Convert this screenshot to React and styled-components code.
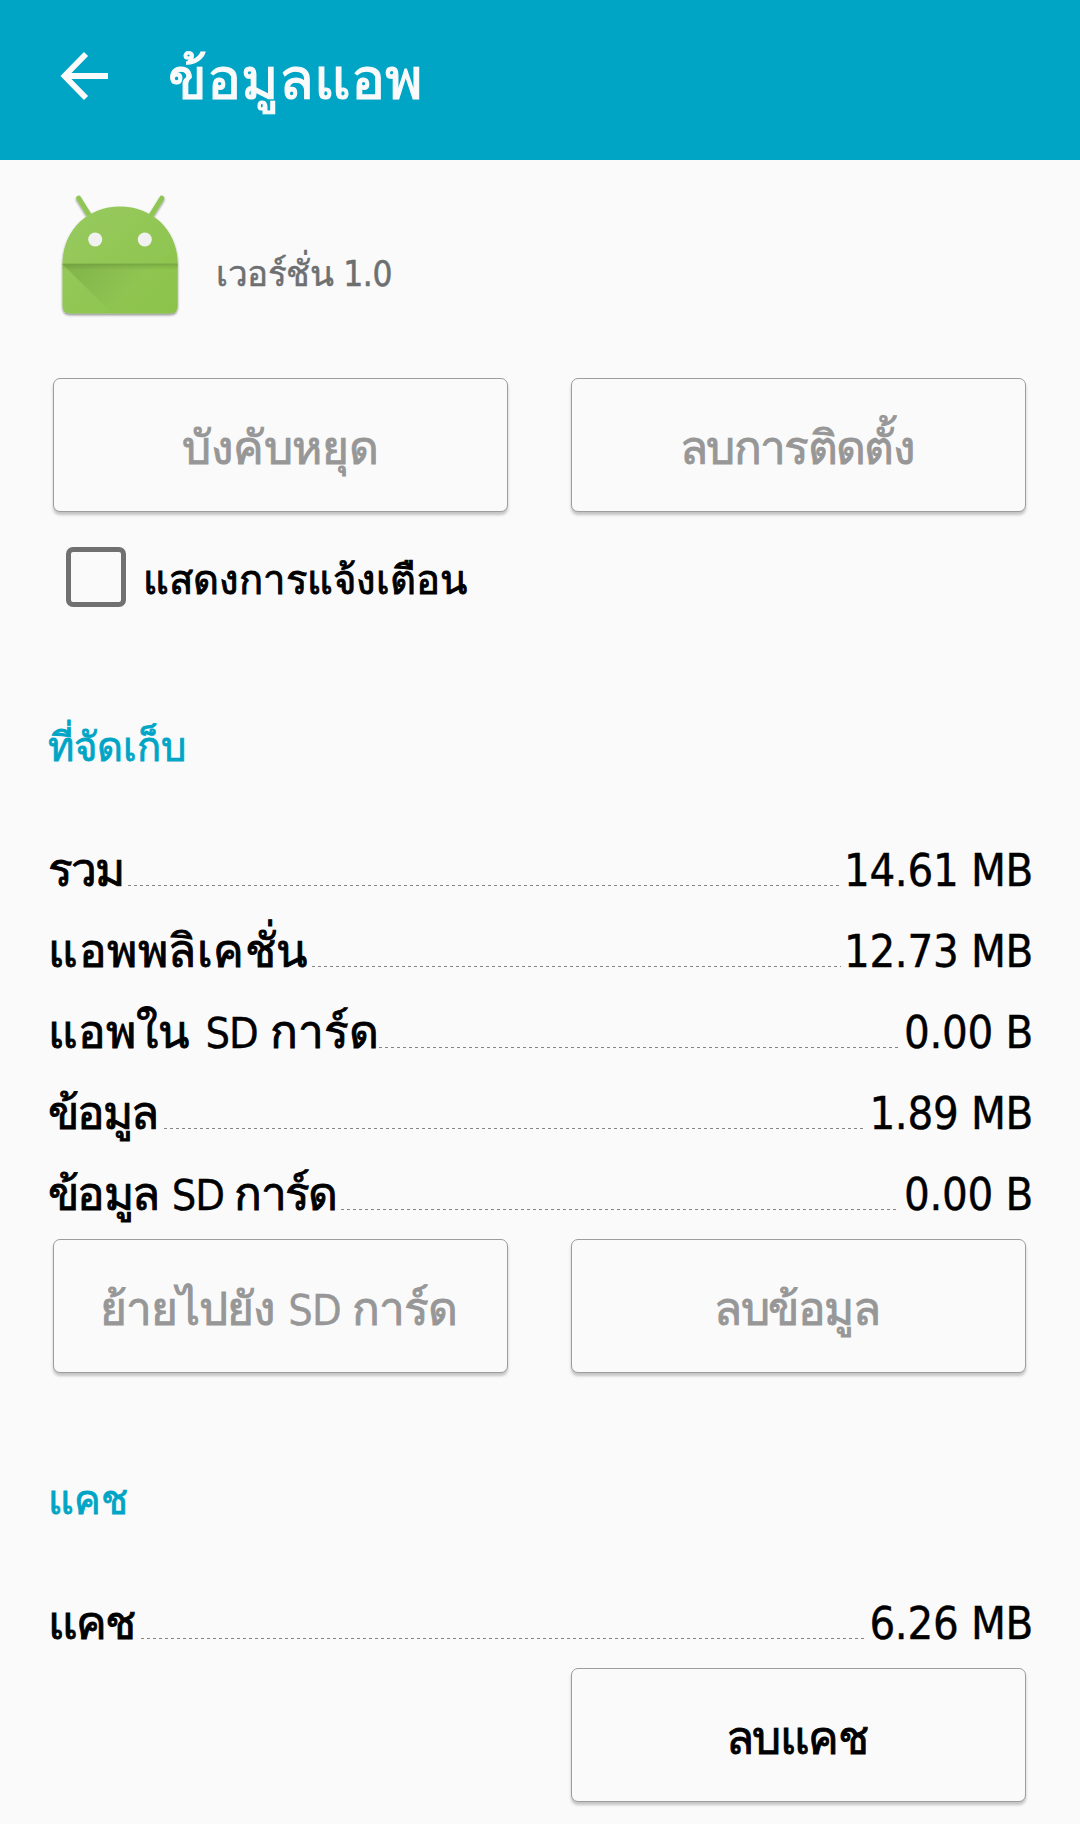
import React from "react";
import styled, { createGlobalStyle } from "styled-components";

const GlobalStyle = createGlobalStyle`
  *, *::before, *::after { box-sizing: border-box; }
  body {
    margin: 0;
    background: #fafafa;
    color: #000;
    font-family: "DejaVu Sans Condensed", "DejaVu Sans", "Noto Sans", sans-serif;
  }
`;

const Screen = styled.div`
  width: 1080px;
  height: 1824px;
  overflow: hidden;
  display: flex;
  flex-direction: column;
  background: #fafafa;
`;

const AppBar = styled.header`
  flex: none;
  height: 160px;
  padding-left: 60px;
  display: flex;
  align-items: center;
  background: #00a5c6;
  color: #fafafa;
`;

const BackIcon = styled.svg`
  flex: none;
  width: 48px;
  height: 48px;
  margin: 0 60px 8px 0;
`;

const Title = styled.h1`
  margin: 0;
  padding-bottom: 2px;
  font-size: 57px;
  font-weight: 400;
  line-height: 158px;
  white-space: nowrap;
  -webkit-text-stroke: 1.2px currentColor;
`;

const AppHeader = styled.section`
  flex: none;
  height: 218px;
  padding: 32px 0 0 60px;
  display: flex;
  align-items: flex-start;
`;

const AppIcon = styled.svg`
  flex: none;
  width: 120px;
  height: 128px;
`;

const Version = styled.p`
  margin: 57px 0 0 36px;
  color: #6d6f71;
  font-size: 35px;
  line-height: 50px;
  letter-spacing: -0.4px;
  white-space: nowrap;
  -webkit-text-stroke: 0.5px currentColor;
`;

const ButtonRow = styled.div`
  flex: none;
  height: 135px;
  padding: 0 54px 0 53px;
  display: flex;
  justify-content: ${(p) => (p.$end ? "flex-end" : "space-between")};
`;

const Button = styled.button`
  width: 455px;
  height: 134px;
  padding: 6px ${(p) => (p.$track < -0.5 ? 4 : 0)}px 0 0;
  border: 1px solid #9d9d9d;
  border-radius: 7px;
  background: #fafafa;
  box-shadow: 0 3px 3px rgba(0, 0, 0, 0.22);
  color: ${(p) => (p.disabled ? "#979797" : "#000")};
  font-family: inherit;
  font-size: 46px;
  line-height: 126px;
  letter-spacing: ${(p) => p.$track}px;
  white-space: nowrap;
  -webkit-text-stroke: 0.9px currentColor;
`;

const CheckRow = styled.label`
  flex: none;
  height: 128px;
  padding: 34px 0 0 66px;
  display: flex;
  align-items: flex-start;
`;

const Checkbox = styled.span`
  flex: none;
  width: 60px;
  height: 60px;
  border: 5px solid #707070;
  border-radius: 7px;
`;

const CheckLabel = styled.span`
  margin-left: 17px;
  font-size: 40px;
  line-height: 66px;
  letter-spacing: 0.1px;
  white-space: nowrap;
  -webkit-text-stroke: 0.9px currentColor;
`;

const SectionTitle = styled.h2`
  flex: none;
  height: 60px;
  margin: ${(p) => p.$top}px 0 53px 48px;
  color: #00a5c6;
  font-size: 40px;
  font-weight: 400;
  line-height: 60px;
  white-space: nowrap;
  -webkit-text-stroke: 0.8px currentColor;
`;

const List = styled.div`
  flex: none;
  margin-bottom: 4px;
  display: flex;
  flex-direction: column;
`;

const Row = styled.div`
  height: 81px;
  padding: 0 44px 0 48px;
  display: flex;
  align-items: baseline;
  line-height: 81px;
`;

const Label = styled.span`
  flex: none;
  width: ${(p) => p.$width}px;
  font-size: 46px;
  letter-spacing: ${(p) => p.$track}px;
  white-space: nowrap;
  -webkit-text-stroke: 0.9px currentColor;
`;

const Latin = styled.span`
  margin: 0 -1px 0 ${(p) => p.$lead}px;
  font-size: 43px;
  letter-spacing: -1px;
  -webkit-text-stroke: 0.3px currentColor;
`;

const Leader = styled.span`
  flex: 1;
  height: 1px;
  background: repeating-linear-gradient(to right, #858585 0 3px, transparent 3px 6px);
`;

const Value = styled.span`
  flex: none;
  width: ${(p) => p.$width}px;
  padding-right: 3px;
  font-size: 45px;
  letter-spacing: -0.3px;
  text-align: right;
  white-space: nowrap;
  -webkit-text-stroke: 0.4px currentColor;
`;

const storage = [
  { id: "total", label: "รวม", value: "14.61 MB", track: -1.8, width: 80, valueWidth: 196 },
  { id: "app", label: "แอพพลิเคชั่น", value: "12.73 MB", track: 0.5, width: 264, valueWidth: 195 },
  {
    id: "app-sd",
    label: <>แอพใน <Latin $lead={4}>SD</Latin> การ์ด</>,
    value: "0.00 B",
    track: -0.1,
    width: 331,
    valueWidth: 138,
  },
  { id: "data", label: "ข้อมูล", value: "1.89 MB", track: -2.1, width: 116, valueWidth: 172 },
  {
    id: "data-sd",
    label: <>ข้อมูล <Latin $lead={2}>SD</Latin> การ์ด</>,
    value: "0.00 B",
    track: -1.7,
    width: 293,
    valueWidth: 139,
  },
];

const cache = [{ id: "cache", label: "แคช", value: "6.26 MB", track: -1.8, width: 93, valueWidth: 171 }];

function SizeList({ rows }) {
  return (
    <List>
      {rows.map((r) => (
        <Row key={r.id}>
          <Label $width={r.width} $track={r.track}>{r.label}</Label>
          <Leader />
          <Value $width={r.valueWidth}>{r.value}</Value>
        </Row>
      ))}
    </List>
  );
}

function Robot() {
  return (
    <AppIcon viewBox="60 192 120 128">
      <defs>
        <linearGradient id="skin" x1="0" y1="0" x2="1" y2="1">
          <stop offset="0" stopColor="#98ca5f" />
          <stop offset="1" stopColor="#8bc34a" />
        </linearGradient>
        <linearGradient id="fold" x1="70" y1="264" x2="120" y2="305" gradientUnits="userSpaceOnUse">
          <stop offset="0" stopColor="#4d7a24" stopOpacity="0.26" />
          <stop offset="1" stopColor="#4d7a24" stopOpacity="0" />
        </linearGradient>
        <linearGradient id="crease" x1="0" y1="0" x2="0" y2="1">
          <stop offset="0" stopColor="#55802c" stopOpacity="0.35" />
          <stop offset="1" stopColor="#55802c" stopOpacity="0" />
        </linearGradient>
        <filter id="drop" x="-10%" y="-10%" width="120%" height="125%">
          <feDropShadow dx="0" dy="1.6" stdDeviation="1.3" floodColor="#000" floodOpacity="0.45" />
        </filter>
      </defs>
      <g filter="url(#drop)">
        <path d="M78.7 198.2 L91 218 M161.8 198.2 L149.5 218" stroke="#8fc653" strokeWidth="5" strokeLinecap="round" />
        <path
          d="M62.5 264 C62.5 231 87 206.6 120 206.6 C153 206.6 177.7 231 177.7 264 V306 Q177.7 313.6 170 313.6 H70.2 Q62.5 313.6 62.5 306 Z"
          fill="url(#skin)"
        />
      </g>
      <path d="M62.5 264 H177.7 V306 Q177.7 313.6 170 313.6 H112 Z" fill="url(#fold)" />
      <rect x="62.5" y="264" width="115.2" height="6" fill="url(#crease)" />
      <path d="M62.5 264 H177.7" stroke="#76a545" strokeWidth="0.8" />
      <circle cx="95.2" cy="239.5" r="7" fill="#f1f1f1" />
      <circle cx="144.8" cy="239.5" r="7" fill="#f1f1f1" />
    </AppIcon>
  );
}

export default function App() {
  return (
    <Screen>
      <GlobalStyle />
      <AppBar>
        <BackIcon viewBox="0 0 48 48" fill="none" stroke="#fafafa" strokeWidth="5.8">
          <path d="M26 2 L4.5 24 L26 46 M5 24 H48" />
        </BackIcon>
        <Title>ข้อมูลแอพ</Title>
      </AppBar>
      <AppHeader>
        <Robot />
        <Version>เวอร์ชั่น 1.0</Version>
      </AppHeader>
      <ButtonRow>
        <Button disabled $track={-0.2}>บังคับหยุด</Button>
        <Button disabled $track={-1.7}>ลบการติดตั้ง</Button>
      </ButtonRow>
      <CheckRow>
        <Checkbox />
        <CheckLabel>แสดงการแจ้งเตือน</CheckLabel>
      </CheckRow>
      <SectionTitle $top={76}>ที่จัดเก็บ</SectionTitle>
      <SizeList rows={storage} />
      <ButtonRow>
        <Button disabled $track={-1}>ย้ายไปยัง <Latin $lead={2}>SD</Latin> การ์ด</Button>
        <Button disabled $track={-1.5}>ลบข้อมูล</Button>
      </ButtonRow>
      <SectionTitle $top={96}>แคช</SectionTitle>
      <SizeList rows={cache} />
      <ButtonRow $end>
        <Button $track={-1.5}>ลบแคช</Button>
      </ButtonRow>
    </Screen>
  );
}
